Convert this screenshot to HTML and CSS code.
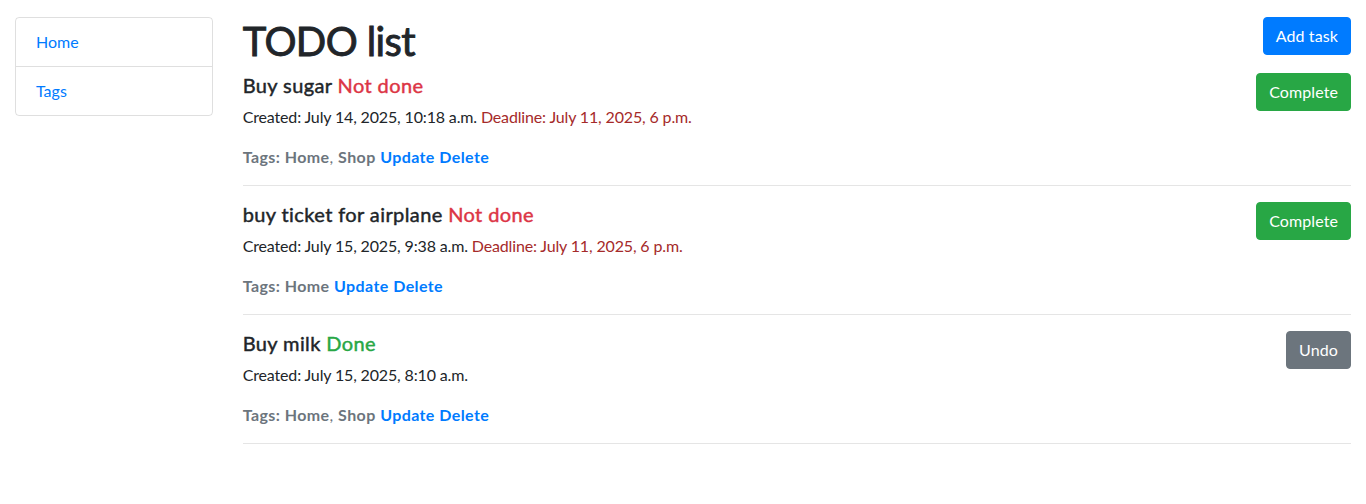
FILE: index.html
```html
<!DOCTYPE html>
<html lang="en">
<head>
<meta charset="utf-8">
<title>TODO list</title>
<link rel="stylesheet" href="styles.css">
</head>
<body>
<div class="page">
  <aside class="sidebar">
    <ul class="list-group">
      <li class="list-group-item"><a href="#">Home</a></li>
      <li class="list-group-item"><a href="#">Tags</a></li>
    </ul>
  </aside>
  <main class="content">
    <div class="header">
      <h1 class="title">TODO list</h1>
      <a href="#" class="btn btn-primary">Add task</a>
    </div>

    <div class="task">
      <div class="task-body">
        <h5 class="task-title">Buy sugar <span class="status-not">Not done</span></h5>
        <p class="task-dates">Created: July 14, 2025, 10:18 a.m. <span class="deadline">Deadline: July 11, 2025, 6 p.m.</span></p>
        <p class="task-tags"><b>Tags:</b> <b>Home</b>, <b>Shop</b> <a href="#" class="action">Update</a> <a href="#" class="action">Delete</a></p>
      </div>
      <a href="#" class="btn btn-success">Complete</a>
    </div>
    <hr class="divider">

    <div class="task">
      <div class="task-body">
        <h5 class="task-title">buy ticket for airplane <span class="status-not">Not done</span></h5>
        <p class="task-dates">Created: July 15, 2025, 9:38 a.m. <span class="deadline">Deadline: July 11, 2025, 6 p.m.</span></p>
        <p class="task-tags"><b>Tags:</b> <b>Home</b> <a href="#" class="action">Update</a> <a href="#" class="action">Delete</a></p>
      </div>
      <a href="#" class="btn btn-success">Complete</a>
    </div>
    <hr class="divider">

    <div class="task">
      <div class="task-body">
        <h5 class="task-title">Buy milk <span class="status-done">Done</span></h5>
        <p class="task-dates">Created: July 15, 2025, 8:10 a.m.</p>
        <p class="task-tags"><b>Tags:</b> <b>Home</b>, <b>Shop</b> <a href="#" class="action">Update</a> <a href="#" class="action">Delete</a></p>
      </div>
      <a href="#" class="btn btn-secondary">Undo</a>
    </div>
    <hr class="divider">
  </main>
</div>
</body>
</html>
```
FILE: styles.css
```css
* { box-sizing: border-box; }

body {
  margin: 0;
  font-family: Lato, "Liberation Sans", sans-serif;
  font-size: 16px;
  line-height: 24px;
  color: #212529;
  background: #fff;
}

a { color: #007bff; text-decoration: none; }

.page {
  display: flex;
  align-items: flex-start;
  padding: 17px 0 0;
}

.sidebar {
  flex: 0 0 16.6667%;
  max-width: 16.6667%;
  padding: 0 15px;
}

.list-group {
  list-style: none;
  margin: 0;
  padding: 0;
  border: 1px solid rgba(0, 0, 0, 0.125);
  border-radius: 4px;
}

.list-group-item {
  padding: 12px 20px;
  line-height: 24px;
}

.list-group-item + .list-group-item {
  border-top: 1px solid rgba(0, 0, 0, 0.125);
}

.content {
  flex: 1;
  min-width: 0;
  padding: 0 15px;
}

.header {
  display: flex;
  justify-content: space-between;
  align-items: flex-start;
}

.title {
  margin: 0 0 8px;
  font-size: 40px;
  line-height: 48px;
  font-weight: 400;
  letter-spacing: -0.6px;
  -webkit-text-stroke: 0.9px currentColor;
}

.btn {
  display: inline-block;
  padding: 6px 12px;
  font-size: 16px;
  line-height: 24px;
  border: 1px solid transparent;
  border-radius: 4px;
  color: #fff;
  white-space: nowrap;
  letter-spacing: 0.1px;
}

.btn-primary { background: #007bff; border-color: #007bff; }
.btn-success { background: #28a745; border-color: #28a745; }
.btn-secondary { background: #6c757d; border-color: #6c757d; }

.task {
  display: flex;
  justify-content: space-between;
  align-items: flex-start;
}

.task-title {
  margin: 0 0 8px;
  font-size: 20px;
  line-height: 24px;
  font-weight: 400;
  letter-spacing: 0.4px;
  -webkit-text-stroke: 0.45px currentColor;
}

.status-not { color: #dc3545; }
.status-done { color: #28a745; }

.task-dates {
  margin: 0 0 16px;
  letter-spacing: -0.15px;
}

.deadline { color: #a52a2a; }

.task-tags {
  margin: 0;
  color: #6c757d;
  letter-spacing: 0.4px;
}

.task-tags b { font-weight: 700; }

.action { font-weight: 700; }

.divider {
  margin: 16px 0;
  border: 0;
  border-top: 1px solid rgba(0, 0, 0, 0.1);
  height: 0;
}
```
